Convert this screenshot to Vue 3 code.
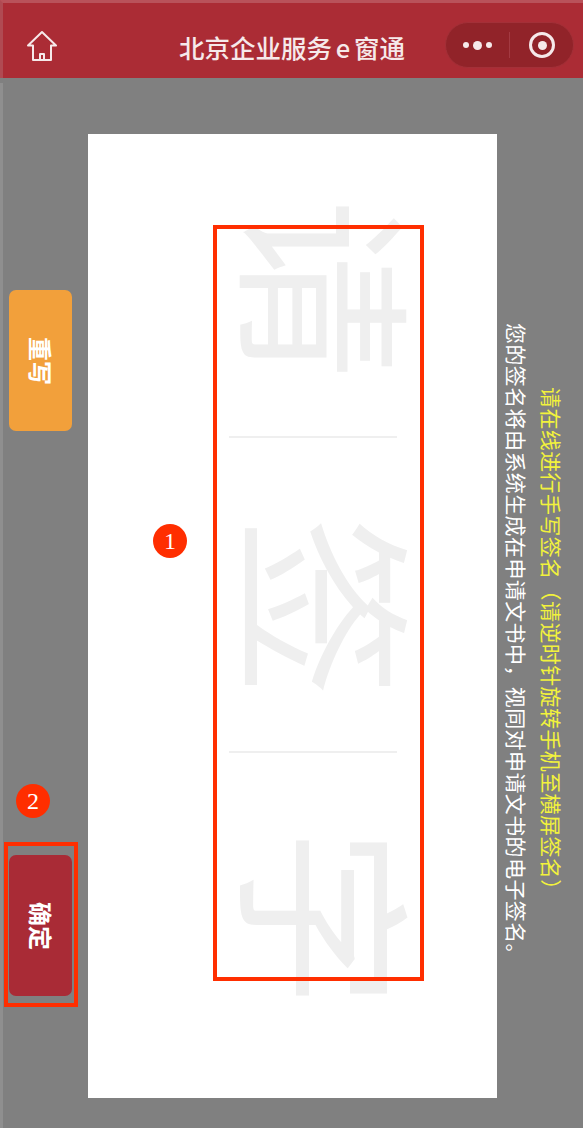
<script setup>
const watermark = [
  { char: '请', cls: 'cell-a' },
  { char: '签', cls: 'cell-b' },
  { char: '字', cls: 'cell-c' },
]
</script>

<template>
  <div class="page">
    <header class="nav">
      <button class="home" aria-label="首页">
        <svg viewBox="0 0 30 32" width="30" height="32" fill="none" stroke="#f6e9ea" stroke-width="2" stroke-linejoin="round" stroke-linecap="round">
          <path d="M15 2 L29 15.5 L24 15.5 L24 30 L6 30 L6 15.5 L1 15.5 Z" />
          <path d="M13 30 V24 H17 V30" />
        </svg>
      </button>
      <h1 class="title">北京企业服务 e 窗通</h1>
      <div class="capsule">
        <div class="dots"><i class="dot"></i><i class="dot big"></i><i class="dot"></i></div>
        <span class="sep"></span>
        <div class="target"><i></i></div>
      </div>
    </header>

    <main class="stage">
      <aside class="actions">
        <button class="btn rewrite"><span>重写</span></button>
        <button class="btn confirm"><span>确定</span></button>
      </aside>

      <section class="canvas">
        <div v-for="(w, i) in watermark" :key="w.char" class="cell" :class="w.cls">
          <span class="glyph">{{ w.char }}</span>
          <span v-if="i < 2" class="rule"></span>
        </div>
      </section>

      <section class="tips">
        <p class="tip yellow">请在线进行手写签名（请逆时针旋转手机至横屏签名）</p>
        <p class="tip">您的签名将由系统生成在申请文书中，视同对申请文书的电子签名。</p>
      </section>
    </main>

    <div class="mark box-one"></div>
    <div class="mark box-two"></div>
    <div class="badge badge-one">1</div>
    <div class="badge badge-two">2</div>
  </div>
</template>

<style>
html, body { margin: 0; background: #808080; }
</style>

<style scoped>
.page {
  position: relative;
  width: 583px;
  height: 1128px;
  overflow: hidden;
  background: #808080;
  font-family: "Noto Sans CJK SC", "Liberation Sans", sans-serif;
}
.nav {
  box-sizing: border-box;
  height: 78px;
  display: grid;
  grid-template-columns: 1fr auto 1fr;
  align-items: start;
  background: #ab2c35;
  border-top: 3px solid #b9525a;
  border-left: 3px solid #b04a52;
}
.home {
  justify-self: start;
  margin: 27px 0 0 24px;
  padding: 0;
  border: 0;
  background: none;
  display: block;
  line-height: 0;
}
.title {
  margin: 26px 0 0;
  font-size: 25.5px;
  line-height: 36px;
  font-weight: 500;
  color: #f6e9ea;
  white-space: nowrap;
  word-spacing: -2px;
  transform: translateX(-1px);
}
.capsule {
  justify-self: end;
  box-sizing: border-box;
  width: 129px;
  height: 46px;
  margin: 19px 9px 0 0;
  display: flex;
  align-items: center;
  border-radius: 23px;
  background: #912329;
  border: 1px solid #a33038;
}
.dots {
  width: 63px;
  display: flex;
  align-items: center;
  justify-content: center;
  gap: 4px;
}
.dot { width: 6px; height: 6px; border-radius: 50%; background: #f6e9ea; }
.dot.big { width: 9px; height: 9px; }
.sep { width: 1px; height: 26px; background: #a33a42; }
.target {
  box-sizing: border-box;
  width: 26px;
  height: 26px;
  margin-left: 19px;
  border: 3px solid #f6e9ea;
  border-radius: 50%;
  display: flex;
  align-items: center;
  justify-content: center;
}
.target i { width: 9px; height: 9px; border-radius: 50%; background: #f6e9ea; }

.stage {
  box-sizing: border-box;
  margin-top: 5px;
  height: 1045px;
  display: flex;
  border-left: 3px solid #8f8f8f;
}
.actions {
  box-sizing: border-box;
  width: 85px;
  flex: none;
  padding: 207px 0 0 6px;
  display: flex;
  flex-direction: column;
  gap: 424px;
}
.btn {
  width: 63px;
  height: 141px;
  padding: 0;
  border: 0;
  border-radius: 7px;
  display: flex;
  align-items: center;
  justify-content: center;
  color: #fff;
  font-family: inherit;
  font-size: 24px;
  font-weight: 700;
}
.btn span { writing-mode: vertical-rl; text-orientation: sideways; line-height: 1; }
.rewrite { background: #f2a03b; }
.confirm { background: #a92b36; }

.canvas {
  box-sizing: border-box;
  width: 409px;
  height: 964px;
  margin-top: 51px;
  flex: none;
  background: #fff;
  display: flex;
  flex-direction: column;
  align-items: center;
}
.cell {
  box-sizing: border-box;
  display: flex;
  flex-direction: column;
  align-items: center;
  width: 100%;
  flex: none;
  padding-left: 80px;
}
.cell-a { height: 304px; padding-top: 65px; }
.cell-b { height: 315px; padding-top: 79px; }
.cell-c { padding-top: 75px; }
.glyph {
  writing-mode: vertical-rl;
  text-orientation: sideways;
  font-size: 180px;
  line-height: 180px;
  color: #efefef;
  height: 180px;
  width: 180px;
  display: block;
  flex: none;
}
.rule {
  width: 168px;
  height: 2px;
  margin-top: auto;
  background: #efefef;
  transform: translateX(-20px);
}

.tips {
  flex: 1;
  display: flex;
  flex-direction: row-reverse;
  justify-content: flex-start;
  align-items: center;
  padding: 76px 14px 0 0;
  min-width: 0;
  box-sizing: border-box;
}
.tip {
  margin: 0;
  writing-mode: vertical-rl;
  text-orientation: sideways;
  font-size: 21px;
  line-height: 35px;
  letter-spacing: 0.4px;
  color: #fff;
  white-space: nowrap;
}
.yellow { color: #f2f23c; }

.mark {
  position: absolute;
  box-sizing: border-box;
  border: 4px solid #ff2e00;
}
.box-one { left: 213px; top: 225px; width: 211px; height: 756px; }
.box-two { left: 4px; top: 842px; width: 74px; height: 165px; }
.badge {
  position: absolute;
  width: 34px;
  height: 34px;
  border-radius: 50%;
  background: #ff2e00;
  color: #fff;
  font-family: "Liberation Serif", serif;
  font-size: 24px;
  line-height: 34px;
  text-align: center;
}
.badge-one { left: 153px; top: 524px; }
.badge-two { left: 16px; top: 784px; }
</style>
